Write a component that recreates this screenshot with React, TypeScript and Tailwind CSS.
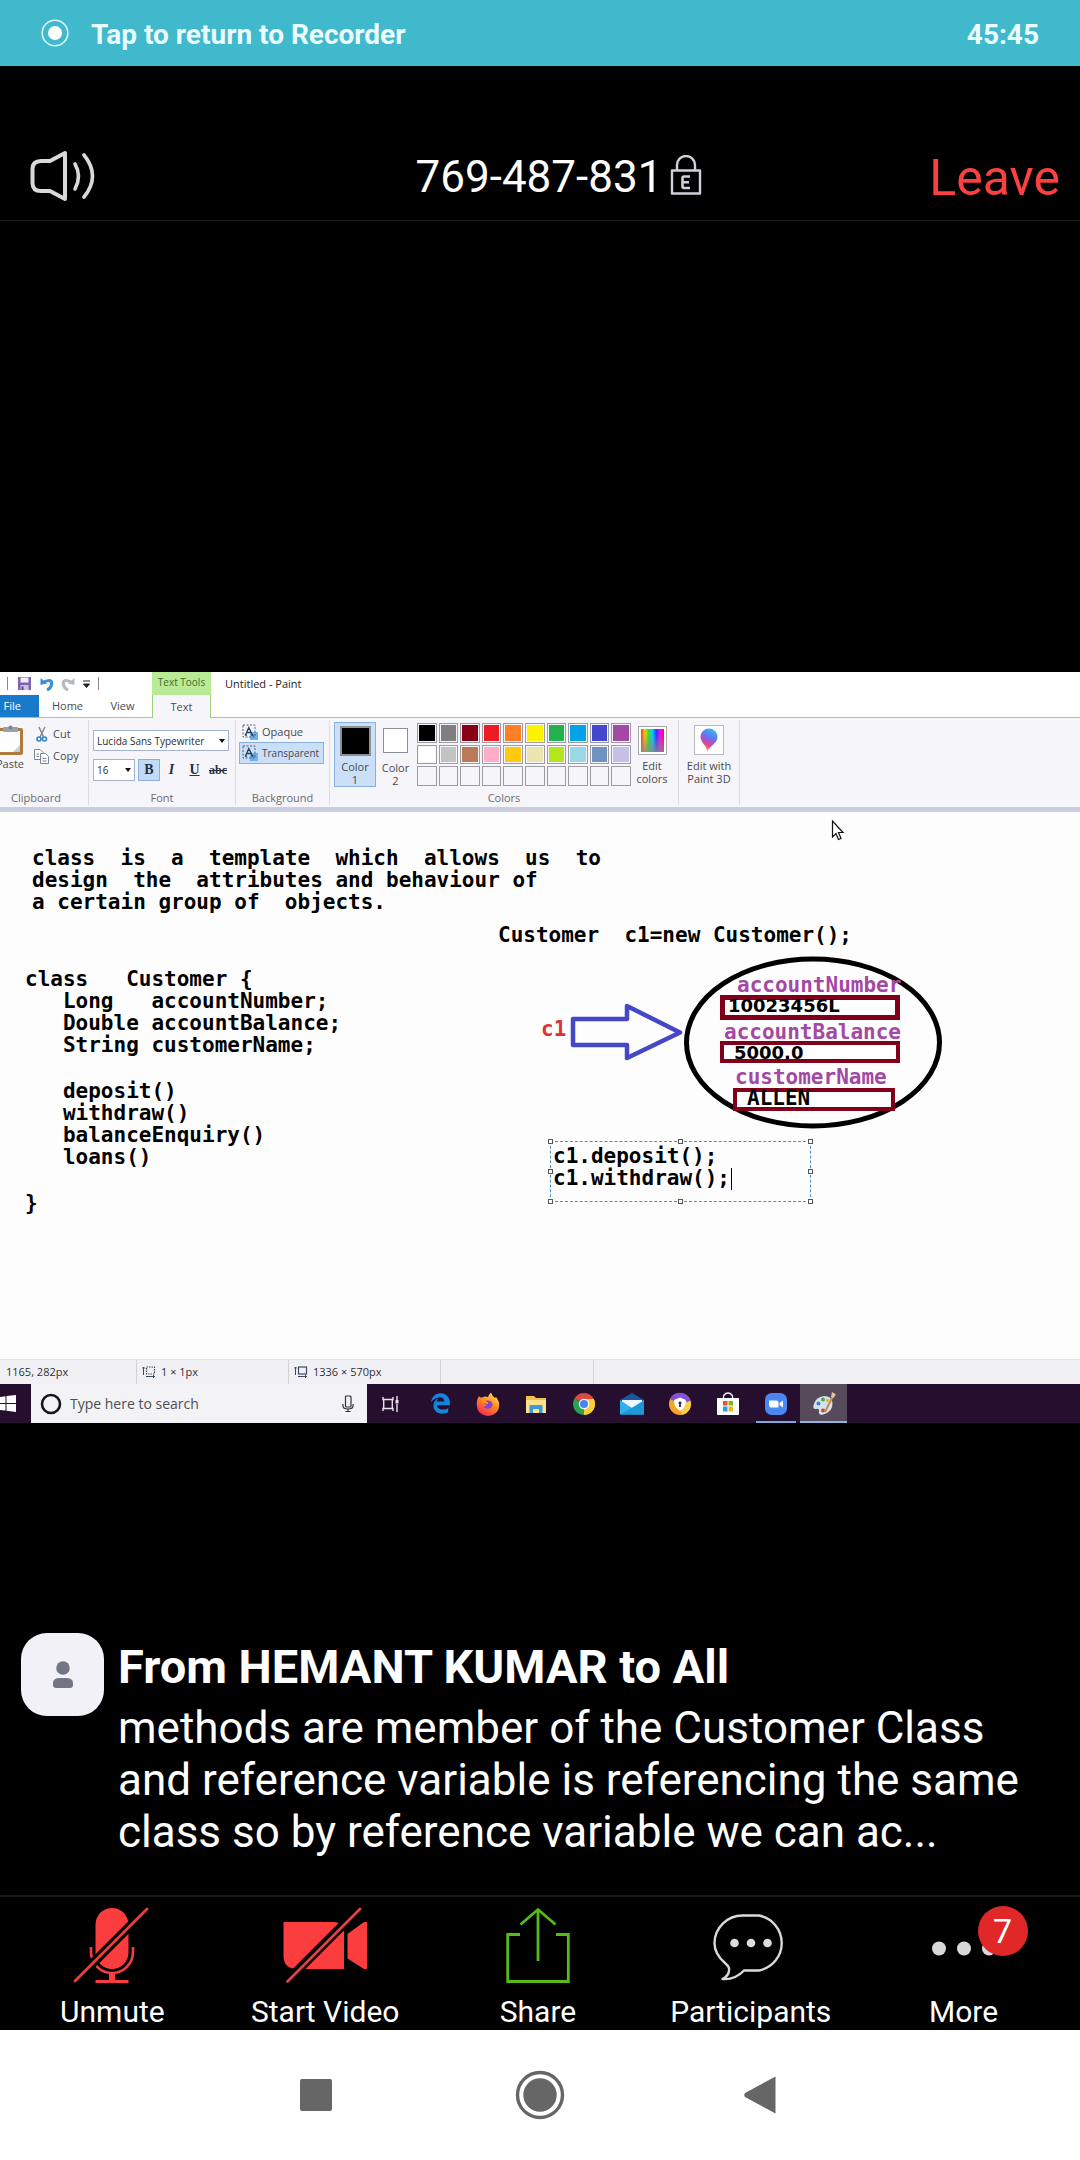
import React from "react";
import { FaEdgeLegacy } from "react-icons/fa6";

const paletteColors = [
  "#000000", "#7f7f7f", "#880015", "#ed1c24", "#ff7f27", "#fff200", "#22b14c", "#00a2e8", "#4448cc", "#a349a4",
  "#ffffff", "#c3c3c3", "#b97a57", "#ffaec9", "#ffc90e", "#ece5b0", "#b5e61d", "#99d9e4", "#7092be", "#c8bfe7",
  "", "", "", "", "", "", "", "", "", "",
];

function RecorderBar() {
  return (
    <button className="flex h-[66px] w-full shrink-0 items-center justify-between bg-[#40b9cc] pr-[41px] pl-[41px] text-left text-[28px] leading-8 font-bold text-[#eafcff]">
      <span className="flex items-center gap-[22px]">
        <svg className="size-7" viewBox="0 0 28 28" aria-hidden="true">
          <circle cx="14" cy="14" r="12.8" fill="none" stroke="#dff6fa" strokeWidth="1.6" />
          <circle cx="14" cy="14" r="7" fill="#fff" />
        </svg>
        <span className="pt-1">Tap to return to Recorder</span>
      </span>
      <span className="pt-1">45:45</span>
    </button>
  );
}

function MeetingHeader() {
  return (
    <header className="grid h-[155px] shrink-0 grid-cols-[1fr_auto_1fr] items-end border-b border-[#1c1c1c] pr-5 pb-[13px] pl-[30px]">
      <button aria-label="Speaker" className="justify-self-start pb-[5px]">
        <svg className="h-[52px] w-[66px]" viewBox="0 0 66 52" fill="none" stroke="#d9d9d9" strokeWidth="4" strokeLinejoin="round" strokeLinecap="round" aria-hidden="true">
          <path d="M2.500 19Q2.500 11 11 11H20L35 3V49L20 41H11Q2.500 41 2.500 33Z" />
          <path d="M45 14Q52 26 45 39" strokeWidth="3.6" />
          <path d="M54 5Q71 26 54 47" strokeWidth="3.6" />
        </svg>
      </button>
      <h1 className="ml-7 flex items-center gap-2 pb-1 text-[44px] leading-[52px] text-white">
        769-487-831
        <svg className="mb-1 h-10 w-8" viewBox="0 0 32 40" fill="none" stroke="#d0d0da" strokeWidth="2.400" strokeLinejoin="round" aria-label="Encrypted">
          <path d="M7 15V10a9 9 0 0 1 18 0V15" />
          <rect x="2" y="15.500" width="28" height="23" />
          <path d="M20 21.500H14Q12.500 21.500 12.500 23V31.500Q12.500 33 14 33H20M13 27.200H19" strokeWidth="2.600" />
        </svg>
      </h1>
      <button className="justify-self-end text-[50px] leading-[58px] text-[#fa4040]">Leave</button>
    </header>
  );
}

function Caret() {
  return (
    <svg className="pointer-events-none absolute top-1/2 right-1 h-1 w-[6px] -translate-y-1/2" viewBox="0 0 6 4" aria-hidden="true">
      <path d="M0 0H6L3 4Z" fill="#111" />
    </svg>
  );
}

function TextSelectIcon() {
  return (
    <svg className="size-4 shrink-0" viewBox="0 0 16 16" aria-hidden="true">
      <path d="M8 8H16V16H8Z" fill="#6db0f4" />
      <rect x="1" y="1" width="12" height="12" fill="none" stroke="#4a5c78" strokeDasharray="2 1.500" />
      <path d="M3.500 11L6.800 3.500L10.500 11M4.800 8.500H9M2.800 11.200H5M9 11.200H11.500" fill="none" stroke="#26405f" strokeWidth="1.300" />
    </svg>
  );
}

function RibbonGroup({ label, className, children }: { label?: string; className: string; children: React.ReactNode }) {
  return (
    <section className={`my-[2px] flex shrink-0 flex-col border-r border-[#dcdce2] ${className}`}>
      <div className="flex-1">{children}</div>
      <p className="h-[15px] text-center leading-[15px] text-[#6b6b6f]">{label}</p>
    </section>
  );
}

function TitleBar() {
  return (
    <div className="flex h-[23px] items-center bg-white">
      <div className="flex w-[152px] items-center pl-[7px]">
        <span className="h-[13px] w-px bg-[#888]" />
        <button aria-label="Save" className="ml-[9px]">
          <svg className="size-[15px]" viewBox="0 0 15 15" aria-hidden="true">
            <rect x="1" y="1" width="13" height="13" fill="#7d62b0" />
            <rect x="3.500" y="1.500" width="8" height="5" fill="#f2edfa" />
            <rect x="3.500" y="9" width="8" height="5" fill="#cdbfe6" />
            <rect x="4.500" y="10.500" width="2" height="3.500" fill="#5c4390" />
          </svg>
        </button>
        <button aria-label="Undo" className="ml-2">
          <svg className="size-[14px]" viewBox="0 0 14 14" aria-hidden="true">
            <path d="M4 5Q13 1 11.500 8Q10.500 11.500 7 13" fill="none" stroke="#3d8fd6" strokeWidth="3.200" />
            <path d="M0.500 1V8L7 6.500Z" fill="#3d8fd6" />
          </svg>
        </button>
        <button aria-label="Redo" className="ml-[7px]">
          <svg className="size-[14px]" viewBox="0 0 14 14" aria-hidden="true">
            <path d="M10 5Q1 1 2.500 8Q3.500 11.500 7 13" fill="none" stroke="#b4bac2" strokeWidth="3.200" />
            <path d="M13.500 1V8L7 6.500Z" fill="#b4bac2" />
          </svg>
        </button>
        <button aria-label="Customize toolbar" className="ml-2">
          <svg className="h-2 w-[7px]" viewBox="0 0 7 8" aria-hidden="true">
            <path d="M0 1H7M0.500 4H6.500L3.500 7.500Z" fill="#222" stroke="#222" />
          </svg>
        </button>
        <span className="ml-2 h-[13px] w-px bg-[#888]" />
      </div>
      <div className="h-full w-[59px] bg-[#b9eb96] text-center text-[10px] leading-[20px] whitespace-nowrap text-[#3f6b2c]">Text Tools</div>
      <h2 className="pl-[14px] text-[#222]">Untitled - Paint</h2>
    </div>
  );
}

function RibbonTabs() {
  return (
    <nav className="flex h-[23px] border-b border-[#9bd077] bg-white leading-[22px] text-[#4a4a4e]">
      <button className="h-[22px] w-[39px] bg-[#1979ca] pr-[18px] text-right text-white">File</button>
      <button className="w-[57px]">Home</button>
      <button className="w-[53px]">View</button>
      <button className="ml-[3px] h-[23px] w-[59px] border-x border-[#9bd077] bg-[#f6f5fa]">Text</button>
    </nav>
  );
}

function Ribbon() {
  return (
    <div className="flex h-[94px] border-b-[5px] border-[#c9cfe1] bg-[#f6f5fa] text-[#4a4a4e]">
      <RibbonGroup label="Clipboard" className="w-[89px] pr-4 pl-0">
        <div className="flex pt-[5px]">
          <button className="flex w-6 flex-col items-end">
            <svg className="h-[31px] w-6" viewBox="0 0 24 31" aria-hidden="true">
              <rect x="-4" y="3" width="27" height="27" rx="2" fill="#b07a3c" />
              <rect x="-2" y="6" width="22" height="21" fill="#fdfdfd" />
              <path d="M13 27L20 20V27Z" fill="#c9ccd4" />
              <rect x="3" y="2" width="15" height="5" rx="1" fill="#9aa0aa" />
              <circle cx="10.500" cy="2.500" r="2" fill="#7d848f" />
            </svg>
            <span className="leading-4">Paste</span>
          </button>
          <div className="ml-[10px] flex flex-col items-start gap-1">
            <button className="flex h-[18px] items-center gap-1">
              <svg className="h-4 w-[15px]" viewBox="0 0 15 16" aria-hidden="true">
                <path d="M5 1L9.500 11M11 1L6 11" stroke="#7e8794" strokeWidth="1.500" />
                <circle cx="5" cy="13" r="2" fill="none" stroke="#2e84cc" strokeWidth="1.600" />
                <circle cx="10.500" cy="13" r="2" fill="none" stroke="#2e84cc" strokeWidth="1.600" />
              </svg>
              Cut
            </button>
            <button className="flex h-[18px] items-center gap-1">
              <svg className="h-4 w-[15px]" viewBox="0 0 15 16" fill="#fff" stroke="#7b8798" aria-hidden="true">
                <path d="M.5 1.500H6L9 4.500V11.500H.5Z" />
                <path d="M6.500 5.500H11.500L14.500 8.500V15.500H6.500Z" />
                <path d="M8.500 10.500H12.500M8.500 13H12.500M2.500 6H5M2.500 8.500H5" />
              </svg>
              Copy
            </button>
          </div>
        </div>
      </RibbonGroup>

      <RibbonGroup label="Font" className="w-[147px]">
        <div className="flex flex-col gap-2 pt-[10px] pl-1">
          <label className="relative block h-[21px] w-[136px]">
            <span className="sr-only">Font family</span>
            <select className="h-full w-full appearance-none border border-[#a5b2d3] bg-white pl-[3px] text-[10px] leading-4 text-[#2d2d33]">
              <option>Lucida Sans Typewriter</option>
            </select>
            <Caret />
          </label>
          <div className="flex items-center">
            <label className="relative block h-[22px] w-[42px]">
              <span className="sr-only">Font size</span>
              <select className="h-full w-full appearance-none border border-[#a5b2d3] bg-white pl-[3px] text-[10px] leading-4 text-[#2d2d33]">
                <option>16</option>
              </select>
              <Caret />
            </label>
            <div className="ml-[3px] flex font-['Liberation_Serif',serif] text-[14px] leading-5 text-[#263042]">
              <button className="h-[22px] w-[22px] border border-[#8ab0e0] bg-[#c3daf7] font-bold">B</button>
              <button className="w-[23px] font-bold italic">I</button>
              <button className="w-[23px] font-bold underline">U</button>
              <button className="w-[24px] text-[12px] font-bold line-through">abc</button>
            </div>
          </div>
        </div>
      </RibbonGroup>

      <RibbonGroup label="Background" className="w-[94px]">
        <div className="flex flex-col pt-[2px] pl-[3px]">
          <button className="flex h-5 items-center gap-1 pl-[3px]">
            <TextSelectIcon />
            Opaque
          </button>
          <button className="flex h-[22px] w-[85px] items-center gap-1 border border-[#8ab0e0] bg-[#cbdff8] pl-[2px] text-[10px] whitespace-nowrap">
            <TextSelectIcon />
            Transparent
          </button>
        </div>
      </RibbonGroup>

      <RibbonGroup label="Colors" className="w-[349px]">
        <div className="flex items-start pt-[2px] pl-1 leading-[13px]">
          <button className="flex h-[65px] w-[42px] flex-col items-center border border-[#8ab0e0] bg-[#cbdff8] pt-[3px]">
            <span className="mb-1 size-[31px] border-2 border-[#8b8f96] bg-black" />
            Color
            <span>1</span>
          </button>
          <button className="flex w-[39px] flex-col items-center pt-[6px]">
            <span className="mb-2 size-[25px] border border-[#8b8f96] bg-white" />
            Color
            <span>2</span>
          </button>
          <div className="mt-px ml-[2px] grid h-[63px] w-[214px] grid-cols-10 gap-[2px]">
            {paletteColors.map((color, i) => (
              <button
                key={i}
                aria-label={color ? `Color ${color}` : "Empty swatch"}
                className="border border-[#9c9ca2] p-px"
              >
                <span className="block h-full w-full" style={{ backgroundColor: color || "#f6f5fa" }} />
              </button>
            ))}
          </div>
          <button className="ml-1 flex w-[34px] flex-col items-center pt-1">
            <span className="mb-1 block size-[29px] border border-[#aaa] bg-white p-[2px]">
              <span className="block h-full w-full bg-[linear-gradient(to_top,#888888cc,transparent_80%),linear-gradient(to_right,#f33,#fc0,#3d3,#0cf,#33f,#f0f,#f06)]" />
            </span>
            Edit
            <span>colors</span>
          </button>
        </div>
      </RibbonGroup>

      <RibbonGroup className="w-[61px]">
        <button className="flex w-full flex-col items-center pt-[5px] leading-[13px]">
          <span className="mb-1 grid size-[30px] place-items-center border border-[#bbb] bg-white">
            <svg className="h-6 w-[18px]" viewBox="0 0 18 24" aria-hidden="true">
              <defs>
                <linearGradient id="pin" x1="0.700" y1="0" x2="0.300" y2="1">
                  <stop offset="0" stopColor="#31c0f5" />
                  <stop offset="0.400" stopColor="#6a6ff0" />
                  <stop offset="0.700" stopColor="#e0409a" />
                  <stop offset="1" stopColor="#ffae1c" />
                </linearGradient>
              </defs>
              <path d="M9 0.500A8.500 8.500 0 0 1 17.500 9C17.500 15 11 17 7 23.500C7.500 18 .5 15 .5 9A8.500 8.500 0 0 1 9 .5Z" fill="url(#pin)" />
            </svg>
          </span>
          Edit with
          <span>Paint 3D</span>
        </button>
      </RibbonGroup>
    </div>
  );
}

function Handle({ className }: { className: string }) {
  return <span className={`absolute size-[5px] border border-[#555] bg-white ${className}`} />;
}

function Canvas() {
  return (
    <div className="relative h-[547px] overflow-hidden bg-[#fdfdfe] font-['DejaVu_Sans_Mono','Liberation_Mono',monospace] text-[21px] leading-[22px] font-bold whitespace-pre text-black">
      <svg className="absolute top-0 left-0 h-[547px] w-[1080px]" viewBox="0 812 1080 547" fill="none" aria-hidden="true">
        <ellipse cx="813" cy="1042.500" rx="126.500" ry="83.500" stroke="#000" strokeWidth="5" />
        <path d="M573 1019H627V1006L680 1032.500L627 1058V1045H573Z" stroke="#4448c6" strokeWidth="4.500" strokeLinejoin="round" />
        <path d="M832.500 821V837L836 833.500L838.500 839.500L841 838.500L838.500 832.500H843Z" fill="#fff" stroke="#111" strokeWidth="1.200" />
      </svg>
      <pre className="absolute top-[35px] left-8 font-[inherit]">{`class  is  a  template  which  allows  us  to
design  the  attributes and behaviour of
a certain group of  objects.`}</pre>
      <p className="absolute top-28 left-[498px]">{"Customer  c1=new Customer();"}</p>
      <div className="absolute top-[156px] left-[25px] flex flex-col gap-6">
        <pre className="font-[inherit]">{`class   Customer {
   Long   accountNumber;
   Double accountBalance;
   String customerName;`}</pre>
        <pre className="font-[inherit]">{`   deposit()
   withdraw()
   balanceEnquiry()
   loans()`}</pre>
        <p>{"}"}</p>
      </div>
      <p className="absolute top-[206px] left-[541px] text-[#dd3038]">c1</p>
      <div className="absolute top-[183px] left-[720px] h-[25px] w-[180px] border-[5px] border-[#80001c] bg-white" />
      <div className="absolute top-[229px] left-[720px] h-[22px] w-[180px] border-4 border-[#80001c] bg-white" />
      <div className="absolute top-[276px] left-[733px] h-[23px] w-[162px] border-4 border-[#80001c] bg-white" />
      <div className="text-[#a349a4]">
        <p className="absolute top-[162px] left-[737px]">accountNumber</p>
        <p className="absolute top-[209px] left-[724px]">accountBalance</p>
        <p className="absolute top-[254px] left-[735px]">customerName</p>
      </div>
      <p className="absolute top-[183px] left-[728px] font-['DejaVu_Sans',sans-serif] text-[18px]">10023456L</p>
      <p className="absolute top-[230px] left-[734px] font-['DejaVu_Sans',sans-serif] text-[18px]">5000.0</p>
      <p className="absolute top-[275px] left-[747px]">ALLEN</p>
      <div className="absolute top-[329px] left-[550px] h-[61px] w-[261px] border border-dashed border-[#4a90c0]">
        <textarea
          aria-label="Text on canvas"
          className="block h-full w-full resize-none overflow-hidden bg-transparent pt-[3px] pl-[2px] outline-none"
          defaultValue={"c1.deposit();\nc1.withdraw();"}
        />
        <span className="absolute top-[26px] left-[180px] h-[22px] w-px bg-black" />
        <Handle className="-top-[3px] -left-[3px]" />
        <Handle className="-top-[3px] left-[127px]" />
        <Handle className="-top-[3px] -right-[3px]" />
        <Handle className="top-[27px] -left-[3px]" />
        <Handle className="top-[27px] -right-[3px]" />
        <Handle className="-bottom-[3px] -left-[3px]" />
        <Handle className="-bottom-[3px] left-[127px]" />
        <Handle className="-right-[3px] -bottom-[3px]" />
      </div>
    </div>
  );
}

function SizeIcon({ dashed }: { dashed?: boolean }) {
  return (
    <svg className="h-3 w-[14px]" viewBox="0 0 14 12" fill="none" stroke="#3d4a63" aria-hidden="true">
      <rect x="4.500" y="1" width="8" height="7" strokeWidth="1.200" strokeDasharray={dashed ? "1.500 1" : undefined} />
      <path d="M1.500 9V1M0 2.500L1.500 1L3 2.500M4 10.500H12.500M11 9L12.500 10.500L11 12" />
    </svg>
  );
}

function PaintStatus() {
  return (
    <div className="flex h-[25px] border-t border-[#e2e2e6] bg-[#f1f0f4] text-[#303036]">
      <p className="flex w-[137px] items-center border-r border-[#d2d2d7] pl-[6px]">1165, 282px</p>
      <p className="flex w-[152px] items-center gap-[5px] border-r border-[#d2d2d7] pl-[5px]">
        <SizeIcon dashed />1 × 1px
      </p>
      <p className="flex w-[152px] items-center gap-[5px] border-r border-[#d2d2d7] pl-[5px]">
        <SizeIcon />1336 × 570px
      </p>
      <p className="w-[153px] border-r border-[#d2d2d7]" />
    </div>
  );
}

const iconClass = "size-6";

const taskbarApps: { name: string; className: string; icon: React.ReactNode }[] = [
  {
    name: "Microsoft Edge",
    className: "w-12",
    icon: <FaEdgeLegacy className="size-[21px] text-[#1683dc]" />,
  },
  {
    name: "Firefox",
    className: "w-12",
    icon: (
      <svg className={iconClass} viewBox="0 0 24 24" aria-hidden="true">
        <defs>
          <linearGradient id="fox" x1="0.800" y1="0" x2="0.200" y2="1">
            <stop offset="0" stopColor="#ffe24a" />
            <stop offset="0.450" stopColor="#ff8a20" />
            <stop offset="1" stopColor="#f5225c" />
          </linearGradient>
        </defs>
        <path d="M3 4Q4 6 6 5.500Q9 4 12 5Q13 2 15 .5Q16 4 19 6L20 5Q24 10 23 14A11 10 0 0 1 1 14Q0 9 3 4Z" fill="url(#fox)" />
        <path d="M7 10Q9 8 12 8.500Q17 9 16.500 13.500A5 5 0 0 1 7.500 14.500Q9 14.500 11 13Q8 12.500 7 10Z" fill="#8c3fd0" />
        <path d="M5 9Q8 7 10.500 9.500Q12.500 10 12 12Q8 12.500 5 9Z" fill="#ff9a24" />
      </svg>
    ),
  },
  {
    name: "File Explorer",
    className: "w-12",
    icon: (
      <svg className={iconClass} viewBox="0 0 24 24" aria-hidden="true">
        <path d="M2 4H10L12 6H22V21H2Z" fill="#f0c24a" />
        <path d="M2 8H22V21H2Z" fill="#fbe28f" />
        <path d="M5.500 13H18.500V21H15V17H9V21H5.500Z" fill="#3f9bd8" />
      </svg>
    ),
  },
  {
    name: "Chrome",
    className: "w-12",
    icon: (
      <svg className={iconClass} viewBox="0 0 24 24" aria-hidden="true">
        <path d="M12 12L2.500 6.500A11 11 0 0 1 21.500 6.500Z" fill="#dd4b3e" />
        <path d="M12 12L21.500 6.500A11 11 0 0 1 12 23Z" fill="#fbce35" />
        <path d="M12 12L12 23A11 11 0 0 1 2.500 6.500Z" fill="#29a352" />
        <path d="M12 7H21.800A11 11 0 0 1 12 23L16.300 14.500Z" fill="#fbce35" />
        <circle cx="12" cy="12" r="5.200" fill="#fff" />
        <circle cx="12" cy="12" r="4.100" fill="#4586f0" />
      </svg>
    ),
  },
  {
    name: "Mail",
    className: "w-12",
    icon: (
      <svg className={iconClass} viewBox="0 0 24 24" aria-hidden="true">
        <path d="M0 8L12 1L24 8V12H0Z" fill="#16599f" />
        <path d="M2 8H22V16H2Z" fill="#eef8fe" />
        <path d="M0 8L12 16L24 8V22.500H0Z" fill="#31b0ee" />
        <path d="M0 22.500L24 9V22.500Z" fill="#1e98dd" />
      </svg>
    ),
  },
  {
    name: "Secure Browser",
    className: "w-12",
    icon: (
      <svg className={iconClass} viewBox="0 0 24 24" aria-hidden="true">
        <circle cx="12" cy="12" r="11" fill="#f5a623" />
        <path d="M2 7A11 11 0 0 1 22.500 9L12 12Z" fill="#8450d8" />
        <path d="M22.500 9A11 11 0 0 1 14 22.800L12 12Z" fill="#f7d04a" />
        <path d="M12 5.500L18 8Q18 15.500 12 19Q6 15.500 6 8Z" fill="#fff" />
        <path d="M12 9.500a1.500 1.500 0 0 1 .8 2.800L13 15H11L11.200 12.300A1.500 1.500 0 0 1 12 9.500Z" fill="#3a2760" />
      </svg>
    ),
  },
  {
    name: "Microsoft Store",
    className: "w-12",
    icon: (
      <svg className={iconClass} viewBox="0 0 24 24" aria-hidden="true">
        <path d="M7.500 6V4Q9 1 12 1T16.500 4V6" fill="none" stroke="#f2f2f2" strokeWidth="1.300" />
        <path d="M1 6H23V22Q23 23 22 23H2Q1 23 1 22Z" fill="#fff" />
        <path d="M7 9H11.500V13.500H7Z" fill="#e8542c" />
        <path d="M12.500 9H17V13.500H12.500Z" fill="#7db728" />
        <path d="M7 14.500H11.500V19.500H7Z" fill="#24a0e4" />
        <path d="M12.500 14.500H17V19.500H12.500Z" fill="#f7b417" />
      </svg>
    ),
  },
  {
    name: "Zoom",
    className: "w-10 mx-1 border-b-2 border-[#76a9dd] pt-[2px]",
    icon: (
      <svg className={iconClass} viewBox="0 0 24 24" aria-hidden="true">
        <rect x="1" y="1" width="22" height="22" rx="6.500" fill="#4a87f3" />
        <path d="M5 8.500H12.500Q14.500 8.500 14.500 10.500V15.500H7Q5 15.500 5 13.500ZM15.500 11L19 8.500V15.500L15.500 13Z" fill="#fff" />
      </svg>
    ),
  },
  {
    name: "Paint",
    className: "w-[47px] border-b-2 border-[#8ab5e2] bg-[#574a5b] pt-[2px]",
    icon: (
      <svg className={iconClass} viewBox="0 0 24 24" aria-hidden="true">
        <path d="M2 12Q4 5 12 4Q20 4 20.500 11Q21 20 11 22.500Q6 23.500 7 19Q7.500 16 4 17Q0 17.500 2 12Z" fill="#d3e2ee" />
        <circle cx="6.500" cy="11.500" r="2" fill="#3b82c9" />
        <circle cx="11" cy="7.500" r="2" fill="#49a84a" />
        <circle cx="15.500" cy="8.500" r="1.700" fill="#e8b53a" />
        <circle cx="11" cy="18.500" r="2" fill="#cf4633" />
        <path d="M21.500 3L13 20" stroke="#c98a4b" strokeWidth="2" />
        <path d="M19 5L20 0L24 2.500L21.500 6Z" fill="#e3c39a" />
      </svg>
    ),
  },
];

function Taskbar() {
  return (
    <div className="flex h-[39px] bg-[#260f2e]">
      <button aria-label="Start" className="w-[31px]">
        <svg className="h-[17px] w-4" viewBox="0 0 16 17" fill="#fff" aria-hidden="true">
          <path d="M0 2L5.500 1.200V8H0ZM6.500 1L16 0V8H6.500ZM0 9H5.500V15.600L0 15ZM6.500 9H16V17L6.500 15.800Z" />
        </svg>
      </button>
      <label className="flex w-[336px] items-center bg-[#f3f2f5] pr-[13px] pl-[9px]">
        <svg className="size-[22px] shrink-0" viewBox="0 0 22 22" aria-hidden="true">
          <circle cx="11" cy="11" r="9" fill="none" stroke="#161616" strokeWidth="2.600" />
        </svg>
        <span className="sr-only">Search</span>
        <input className="ml-2 min-w-0 flex-1 bg-transparent text-[14px] leading-5 outline-none placeholder:text-[#4e4e53]" placeholder="Type here to search" />
        <svg className="h-[18px] w-3" viewBox="0 0 12 18" fill="none" stroke="#333" strokeWidth="1.200" aria-hidden="true">
          <rect x="3.500" y="1" width="5.500" height="11" rx="1" />
          <path d="M1 9V11Q1 14 6 14T11 11V9M6 14V17M3.500 16.500H8.500" />
        </svg>
      </label>
      <button aria-label="Task view" className="grid w-[49px] place-items-center pr-[3px]">
        <svg className="h-4 w-[17px]" viewBox="0 0 17 16" fill="none" stroke="#e8e3ea" strokeWidth="1.400" aria-hidden="true">
          <path d="M1 1V3.500H11V1M1 15V12.500H11V15M1.700 4V12M10.300 4V12M15 0V4M15 8V16" />
          <path d="M15 4V7.500" strokeWidth="3" />
        </svg>
      </button>
      {taskbarApps.map((app) => (
        <button key={app.name} aria-label={app.name} className={`grid place-items-center ${app.className}`}>
          {app.icon}
        </button>
      ))}
    </div>
  );
}

function SharedScreen() {
  return (
    <section className="overflow-hidden bg-white font-['Open_Sans','Noto_Sans',sans-serif] text-[11px] leading-4">
      <TitleBar />
      <RibbonTabs />
      <Ribbon />
      <Canvas />
      <PaintStatus />
      <Taskbar />
    </section>
  );
}

function ChatPreview() {
  return (
    <article className="flex gap-[14px] pr-10 pl-[21px] text-white">
      <div className="grid size-[83px] shrink-0 place-items-center rounded-[26px] bg-[#f2f1f7]">
        <svg className="h-7 w-5" viewBox="0 0 20 28" fill="#747487" aria-hidden="true">
          <circle cx="10" cy="7" r="6.800" />
          <path d="M0 22Q0 17 7 17H13Q20 17 20 22V24Q20 27 17 27H3Q0 27 0 24Z" />
        </svg>
      </div>
      <div className="min-w-0 flex-1 pt-[6px]">
        <h2 className="text-[47px] leading-[56px] font-bold">From HEMANT KUMAR to All</h2>
        <p className="pt-[7px] text-[44px] leading-[52px]">
          methods are member of the Customer Class
          <br />
          and reference variable is referencing the same
          <br />
          class so by reference variable we can ac...
        </p>
      </div>
    </article>
  );
}

function ToolButton({ label, children }: { label: string; children: React.ReactNode }) {
  return (
    <button className="flex flex-col items-center text-[30px] leading-9 text-white">
      <span className="relative block h-[97px] pt-[6px]">{children}</span>
      {label}
    </button>
  );
}

function MeetingToolbar() {
  return (
    <nav className="grid h-[135px] shrink-0 grid-cols-5 border-t-2 border-[#191919] pr-[10px] pl-[6px]">
      <ToolButton label="Unmute">
        <svg className="h-20 w-20" viewBox="0 0 80 80" aria-hidden="true">
          <rect x="23.500" y="5" width="33" height="61" rx="16.500" fill="#fc3d3d" />
          <path d="M19 44V49A21 21 0 0 0 61 49V44" fill="none" stroke="#fc3d3d" strokeWidth="2.600" />
          <path d="M37 70H43V77H56.500V80H23.500V77H37Z" fill="#fc3d3d" />
          <path d="M0 81L78 3" stroke="#000" strokeWidth="9" />
          <path d="M3 78L75 6" stroke="#e8403f" strokeWidth="2.800" strokeLinecap="round" />
        </svg>
      </ToolButton>
      <ToolButton label="Start Video">
        <svg className="h-20 w-[84px]" viewBox="0 0 84 80" aria-hidden="true">
          <path d="M0.500 19H51Q61 19 61 29V66H15Q.5 66 .5 53Z" fill="#fc3d3d" />
          <path d="M64.500 31L81 19H84V66H81L64.500 55.500Z" fill="#fc3d3d" />
          <path d="M0 82L79 3" stroke="#000" strokeWidth="9" />
          <path d="M4.500 78.500L77 6" stroke="#e8403f" strokeWidth="2.800" strokeLinecap="round" />
        </svg>
      </ToolButton>
      <ToolButton label="Share">
        <svg className="h-20 w-16" viewBox="0 0 64 80" fill="none" stroke="#55bb18" strokeWidth="2.800" aria-hidden="true">
          <path d="M14 31.500H1.700V78.500H62.300V31.500H50" />
          <path d="M32 58V6M14.500 21.500L32 6.500L49.500 21.500" />
        </svg>
      </ToolButton>
      <ToolButton label="Participants">
        <svg className="h-20 w-[76px]" viewBox="0 0 76 80" fill="none" stroke="#d9d9d9" strokeWidth="2.400" aria-hidden="true">
          <path d="M30 12.500H46A28 28 0 0 1 46 67.500H31Q22 77 9.500 76Q17 72 16 65Q15.500 63 12 60Q1.500 51 1.500 40A28 28 0 0 1 30 12.500Z" strokeLinejoin="round" />
          <g fill="#dcdcdc" stroke="none">
            <circle cx="21.500" cy="40" r="4.300" />
            <circle cx="38" cy="40" r="4.300" />
            <circle cx="54.500" cy="40" r="4.300" />
          </g>
        </svg>
      </ToolButton>
      <ToolButton label="More">
        <svg className="h-20 w-16" viewBox="0 0 64 80" fill="#d8d8d8" aria-hidden="true">
          <circle cx="7" cy="45.500" r="7" />
          <circle cx="32" cy="45.500" r="7" />
          <circle cx="57" cy="45.500" r="7" />
        </svg>
        <span className="absolute top-[9px] left-[46px] grid size-[50px] place-items-center rounded-full bg-[#e02828] text-[34px] leading-[50px]">7</span>
      </ToolButton>
    </nav>
  );
}

function SystemNav() {
  return (
    <nav className="flex h-[130px] shrink-0 items-center justify-center gap-[172px] bg-white">
      <button aria-label="Recent apps" className="grid size-[50px] place-items-center pr-1">
        <span className="size-8 rounded-[2px] bg-[#666]" />
      </button>
      <button aria-label="Home">
        <svg className="size-[50px]" viewBox="0 0 50 50" aria-hidden="true">
          <circle cx="25" cy="25" r="22.500" fill="none" stroke="#666" strokeWidth="3.400" />
          <circle cx="25" cy="25" r="16.700" fill="#666" />
        </svg>
      </button>
      <button aria-label="Back" className="grid size-[50px] place-items-center pr-1">
        <svg className="h-[38px] w-8" viewBox="0 0 32 38" aria-hidden="true">
          <path d="M31.500 0.500V37.500L1 21Q-.5 19 1 17Z" fill="#666" />
        </svg>
      </button>
    </nav>
  );
}

export default function App() {
  return (
    <div className="flex min-h-screen flex-col bg-black font-[Roboto,sans-serif]">
      <RecorderBar />
      <MeetingHeader />
      <main className="flex flex-1 flex-col justify-end gap-[210px] pt-10 pb-[37px]">
        <SharedScreen />
        <ChatPreview />
      </main>
      <MeetingToolbar />
      <SystemNav />
    </div>
  );
}
